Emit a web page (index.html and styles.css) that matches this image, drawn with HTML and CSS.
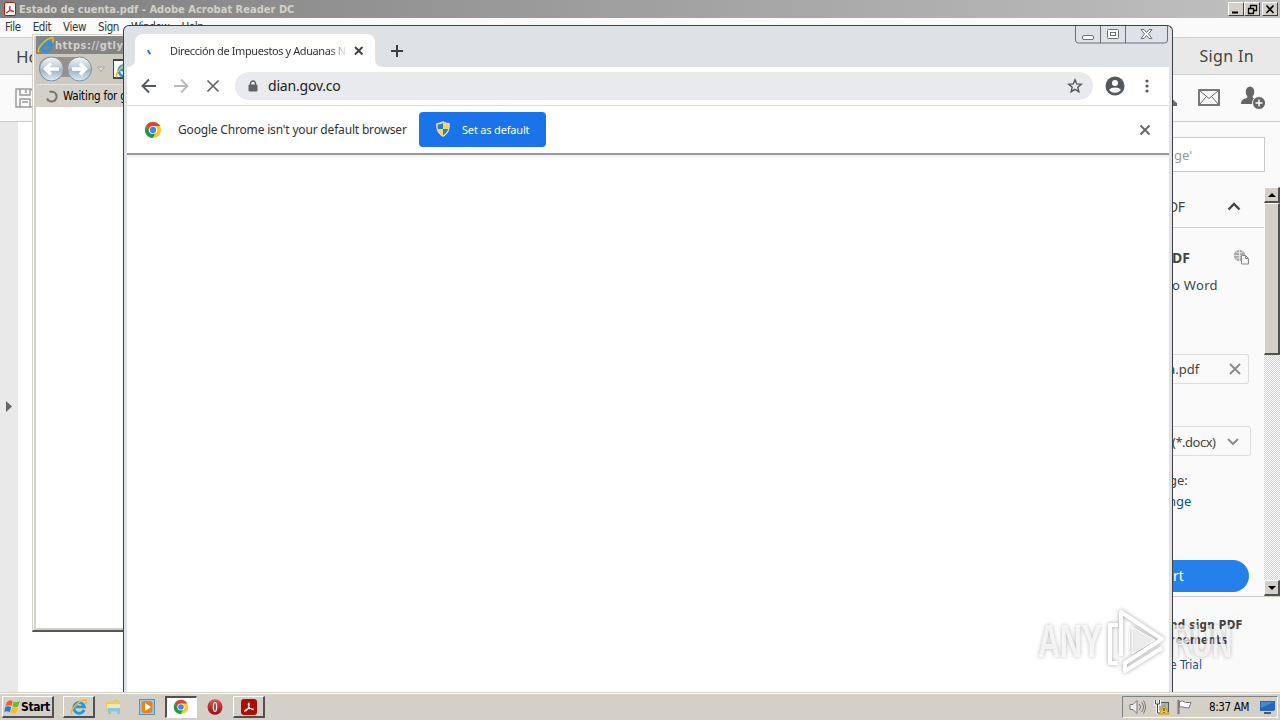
FILE: index.html
```html
<!DOCTYPE html>
<html lang="en">
<head>
<meta charset="utf-8">
<title>Desktop</title>
<link rel="stylesheet" href="styles.css">
</head>
<body>
<svg width="0" height="0" class="defs">
  <defs>
    <linearGradient id="orb" x1="0" y1="0" x2="0" y2="1"><stop offset="0" stop-color="#f4f8fa"/><stop offset=".45" stop-color="#bccbd5"/><stop offset=".55" stop-color="#9fb4c1"/><stop offset="1" stop-color="#d9eef5"/></linearGradient>
    <linearGradient id="opera" x1="0" y1="0" x2="0" y2="1"><stop offset="0" stop-color="#e0555a"/><stop offset="1" stop-color="#970b12"/></linearGradient>
    <symbol id="ie" viewBox="0 0 20 20">
      <path d="M15.700 13.200A6 6 0 1 1 16 9.800H6" fill="none" stroke="#2795df" stroke-width="3.200"/>
      <path d="M2.300 18C-1 15 8 4 15.500 2.200 18.500 1.500 19 4 17.200 7" fill="none" stroke="#e9bc25" stroke-width="1.700"/>
    </symbol>
    <symbol id="chrome" viewBox="0 0 20 20">
      <circle cx="10" cy="10" r="9" fill="#fbc72b"/>
      <path d="M2.200 5.500A9 9 0 0 0 9.500 19L13.700 12 10 10 6.300 12Z" fill="#189b58"/>
      <path d="M2.200 5.500A9 9 0 0 1 17.800 5.500H10L6 11Z" fill="#dc4437"/>
      <circle cx="10" cy="10" r="4.500" fill="#fff"/><circle cx="10" cy="10" r="3.500" fill="#4a83e8"/>
    </symbol>
    <symbol id="pdf" viewBox="0 0 16 16">
      <path d="M3 12.500C4 10 9.500 9 12.700 10.200 14 12 9 11 7.300 6.500 6.500 3 8.500 2.500 8.300 5 8 8.500 5 13.500 3 12.500Z" fill="none" stroke="currentColor" stroke-width="1.200"/>
    </symbol>
  </defs>
</svg>

<section class="acrobat">
  <header class="ac-title">
    <span class="ac-logo"><svg width="12" height="13"><use href="#pdf"/></svg></span>
    <span class="ac-name">Estado de cuenta.pdf - Adobe Acrobat Reader DC</span>
    <span class="win-btns">
      <b><svg width="15" height="13"><path d="M3 9.500h6" stroke="#000" stroke-width="2"/></svg></b>
      <b><svg width="15" height="13"><path d="M5.500 5V2.500h6v5H9M5 2.500h7M3.500 5.500h5v5h-5zM3 5.500h6" fill="none" stroke="#000" stroke-width="1.300"/></svg></b>
      <b class="last"><svg width="15" height="13"><path d="M3.500 2.500l7 7.500M10.500 2.500l-7 7.500" stroke="#000" stroke-width="1.700"/></svg></b>
    </span>
  </header>
  <nav class="ac-menu"><span>File</span><span>Edit</span><span>View</span><span>Sign</span><span>Window</span><span>Help</span></nav>
  <div class="ac-tabs"><span>Home</span><span class="signin">Sign In</span></div>
  <div class="ac-tools">
    <svg width="20" height="22" fill="none" stroke="#9a9a9a" stroke-width="1.500"><path d="M2 2h15l3 3v15H2zM6 2v6h10V2M12 3v3M6 20v-8h10v8M8 15h6"/></svg>
    <svg class="bell" width="8" height="22"><path d="M0 8q2 6 6 8v3H0z" fill="#666"/></svg>
    <svg width="24" height="20" fill="none" stroke="#6a6a6a"><rect x="2" y="2" width="20" height="15" stroke-width="1.800"/><path d="M2.500 2.500l9.500 8 9.500-8M2.500 16.500l7-8M21.500 16.500l-7-8" stroke-width="1"/></svg>
    <svg class="adduser" width="26" height="26" fill="#666"><ellipse cx="9" cy="7" rx="4.300" ry="5.500"/><path d="M0 19c0-4 2-5 6-6l1-3h4l1 3c2 .6 3 1 4 2l-3 4z"/><circle cx="18" cy="18" r="6.500" stroke="#fafafa"/><path d="M18 14.500v7M14.500 18h7" stroke="#fff" stroke-width="1.500"/></svg>
  </div>
  <div class="ac-body">
    <aside class="ac-rail"><svg width="6" height="11"><path d="M0 0l6 5.500L0 11z" fill="#666"/></svg></aside>
    <main class="ac-doc"></main>
    <aside class="ac-panel">
      <div class="search">ge'</div>
      <div class="scroll-area">
        <div class="tools">
          <div class="sec"><span>DF</span><svg width="14" height="9"><path d="M1.500 7.500L7 2l5.500 5.500" fill="none" stroke="#484848" stroke-width="2.400"/></svg></div>
          <div class="heading"><span>DF</span><svg width="17" height="16"><circle cx="6.500" cy="6.500" r="5.700" fill="#aaa"/><path d="M1 6.500h11M6.500 1v11M3 3q3.500 2 7 0M3 10q2-2 5-1" stroke="#eee" fill="none" stroke-width=".8"/><path d="M8.500 6.500h4l3 3v5.500h-7zM12.500 6.500v3h3" fill="#f7f7f7" stroke="#888"/></svg></div>
          <div class="word">o Word</div>
          <div class="file"><span>a.pdf</span><svg width="12" height="12"><path d="M1 1l10 10M11 1L1 11" stroke="#8b8b8b" stroke-width="2"/></svg></div>
          <div class="select"><span>(*.docx)</span><svg width="12" height="8"><path d="M1 1l5 5 5-5" fill="none" stroke="#8f8f8f" stroke-width="2.200"/></svg></div>
          <div class="lang">ge:</div>
          <div class="link">nge</div>
          <div class="convert">rt</div>
        </div>
        <div class="bar">
          <b><svg width="8" height="4"><path d="M0 4l4-4 4 4z"/></svg></b>
          <i></i>
          <b class="down"><svg width="8" height="4"><path d="M0 0h8L4 4z"/></svg></b>
        </div>
      </div>
      <div class="promo"><b>nd sign PDF</b><b>reements</b><span>e Trial</span></div>
    </aside>
  </div>
</section>

<section class="ie">
  <header class="ie-title"><svg width="18" height="18"><use href="#ie"/></svg><span>https://gtly</span></header>
  <div class="ie-nav">
    <svg width="54" height="28"><rect x="1" y="2" width="51" height="20" rx="10" fill="#98918a"/><g stroke="#7a929f"><circle cx="13.500" cy="14" r="12" fill="url(#orb)"/><circle cx="41.500" cy="14" r="12" fill="url(#orb)"/></g><path d="M21 14H8M13 8.500L7.500 14l5.500 5.500M34 14h13M42 8.500l5.500 5.500-5.500 5.500" fill="none" stroke="#fff" stroke-width="3.300"/></svg>
    <svg width="9" height="7"><path d="M.5 1h7L4 5.500z" fill="#ddd" stroke="#aaa49c"/></svg>
    <div class="ie-addr"><svg width="18" height="18"><use href="#ie"/></svg></div>
  </div>
  <div class="ie-tab"><svg width="13" height="13"><path d="M4.500 2A5 5 0 1 1 2 8.500" fill="none" stroke="#77746f" stroke-width="2"/></svg><span>Waiting for g</span></div>
  <div class="ie-page"></div>
</section>

<section class="chrome">
  <header class="strip">
    <svg class="flare" width="8" height="8"><path d="M8 0v8H0q8 0 8-8z" fill="#fff"/></svg>
    <div class="tab">
      <svg width="16" height="16"><path d="M5 7q.6 2.300 2.500 4" fill="none" stroke="#2e72dc" stroke-width="2"/></svg>
      <span class="tab-title">Dirección de Impuestos y Aduanas N</span>
      <svg class="tab-x" width="10" height="10"><path d="M1 1l7.500 7.500M8.500 1L1 8.500" stroke="#3e4145" stroke-width="1.900"/></svg>
    </div>
    <svg class="flare" width="8" height="8"><path d="M0 0v8h8Q0 8 0 0z" fill="#fff"/></svg>
    <svg class="plus" width="14" height="14"><path d="M7 1v12M1 7h12" stroke="#3c4043" stroke-width="2"/></svg>
    <svg class="caption" width="93" height="18" fill="none" stroke="#6a6f78"><path d="M.5 0v14q0 3 3 3h86q3 0 3-3V0M25.500 0v17M50.500 0v17"/><rect x="7.500" y="9.500" width="11" height="4" rx="1.500" fill="#fff"/><rect x="32.500" y="3.500" width="11" height="9" rx="1" fill="#fff"/><rect x="35.500" y="6.500" width="5" height="3"/><path d="M66 3.500h3l2.500 3 2.500-3h3L73.500 8l3.500 4.500h-3l-2.500-3-2.500 3h-3L69.500 8z" fill="#fff"/></svg>
  </header>
  <div class="toolbar">
    <svg width="16" height="16" fill="none" stroke="#55585c" stroke-width="1.900"><path d="M15 8H2M8 1.500L1.500 8 8 14.500"/></svg>
    <svg width="16" height="16" fill="none" stroke="#b7b9bb" stroke-width="1.900"><path d="M1 8h13M8 1.500L14.500 8 8 14.500"/></svg>
    <svg width="16" height="16" fill="none" stroke="#606367" stroke-width="1.700"><path d="M2.500 2.500l11 11M13.500 2.500l-11 11"/></svg>
    <div class="omni">
      <svg width="10" height="12"><path d="M2.500 5V3.500a2.500 2.500 0 0 1 5 0V5" fill="none" stroke="#5f6368" stroke-width="1.400"/><rect x=".5" y="4.500" width="9" height="7" rx="1" fill="#5f6368"/></svg>
      <span>dian.gov.co</span>
      <svg class="star" width="16" height="16"><path d="M8 1.800l1.700 4.100 4.600.4-3.500 3 1.100 4.400L8 11.400l-3.900 2.300 1.100-4.400-3.500-3 4.600-.4z" fill="none" stroke="#53575b" stroke-width="1.400"/></svg>
    </div>
    <svg class="avatar" width="20" height="20"><circle cx="10" cy="10" r="9.500" fill="#54585d"/><circle cx="10" cy="7" r="3" fill="#fff"/><path d="M4 13.800q2-2.400 6-2.400t6 2.400q-2 3-6 3t-6-3z" fill="#fff"/></svg>
    <svg class="dots" width="4" height="14" fill="#55595e"><circle cx="2" cy="2" r="1.600"/><circle cx="2" cy="7" r="1.600"/><circle cx="2" cy="12" r="1.600"/></svg>
  </div>
  <div class="info">
    <svg width="18" height="18"><use href="#chrome"/></svg>
    <span class="msg">Google Chrome isn't your default browser</span>
    <button class="default"><svg width="14" height="16"><path d="M7 .7Q10 2.500 13.300 2.500 14 12 7 15.500 0 12 .7 2.500 4 2.500 7 .7z" fill="#f2d75c" stroke="#d8dde2"/><path d="M7 2v6H2Q1.500 5 1.800 3.500 5 3.500 7 2zM7 8h5q-1 4-5 6z" fill="#347bb9"/></svg><span>Set as default</span></button>
    <svg class="info-x" width="12" height="12"><path d="M1.500 1.500l9 9M10.500 1.500l-9 9" stroke="#65696d" stroke-width="1.900"/></svg>
  </div>
  <div class="page"></div>
</section>

<svg class="mark" width="210" height="76">
  <g fill="#fff" fill-opacity=".75" font-family="Liberation Sans" font-weight="bold" font-size="46">
    <text x="2" y="51" textLength="64" lengthAdjust="spacingAndGlyphs">ANY</text>
    <text x="136" y="51" textLength="60" lengthAdjust="spacingAndGlyphs">RUN</text>
  </g>
  <g fill="none" stroke="#fff" stroke-width="4" stroke-linejoin="round"><path d="M82 19h-8v38h8"/><path d="M85 50V6l41 27-37 24v8l37-23"/><path d="M96 21l23 13-23 14z" fill="#e9e9e9" stroke-width="1"/></g>
</svg>

<footer class="taskbar">
  <div class="start"><svg width="17" height="16"><path d="M3 3q3-3 5.500-1L7.500 7Q5 5.500 1.500 7z" fill="#e85e28"/><path d="M9.500 2.500Q12 4 16 2l-2 5.500q-3 1.500-5.500-.2z" fill="#76b82a"/><path d="M1.300 8q3-1.500 5.800.2l-1.200 5Q3 11.500.3 13z" fill="#2879d0"/><path d="M8.300 8.500q3 1.500 5.500.2l-1.300 5q-3 1.800-5.500-.2z" fill="#f5bd20"/></svg><b>Start</b></div>
  <div class="task raised"><svg width="18" height="18"><use href="#ie"/></svg></div>
  <div class="task"><svg width="17" height="16"><path d="M1 3h6l1-2h6l1 2v10H1z" fill="#e9c76b"/><path d="M2 5h13v5H2z" fill="#f6e6a8"/><path d="M3 15V9h12v6h-3v-3H6v3z" fill="#80c9ea"/></svg></div>
  <div class="task"><svg width="17" height="17"><rect x=".5" y=".5" width="15" height="15" fill="#9fc7e4" stroke="#5e91b8"/><rect x="2.500" y="2" width="11" height="12" rx="3" fill="#ee8215"/><path d="M6 4l6 4-6 4z" fill="#fff"/></svg></div>
  <div class="task pressed"><svg width="16" height="16"><use href="#chrome"/></svg></div>
  <div class="task"><svg width="16" height="16"><ellipse cx="8" cy="8" rx="7.500" ry="7.700" fill="url(#opera)"/><ellipse cx="8" cy="8" rx="2.300" ry="5" fill="#f4e8e8"/><ellipse cx="8" cy="8" rx="1" ry="4" fill="#8a5055"/></svg></div>
  <div class="task raised"><span class="pdf-sq"><svg width="14" height="14"><use href="#pdf"/></svg></span></div>
  <div class="tray">
    <svg width="18" height="16" fill="none" stroke="#777"><path d="M1 5.500h3l4-4v13l-4-4H1z" fill="#eee"/><path d="M10.500 5q2 3 0 6M12.500 3q4 5 0 10M14.500 1.500q4 6.500 0 13"/></svg>
    <svg width="17" height="16"><rect x="4.500" y="3.500" width="11" height="9" fill="#aab2b8" stroke="#555"/><path d="M2.500 1v4h4V1M4.500 5v8h4" fill="none" stroke="#fff" stroke-width="3"/><path d="M2.500 1v4h4V1M4.500 5v9h4" fill="none" stroke="#444"/><path d="M11 6l5 9H6z" fill="#f7cc22" stroke="#c59210"/><path d="M11 9v3M11 13v1" stroke="#222"/></svg>
    <svg width="17" height="16"><path d="M2.500 1v14" stroke="#777" stroke-width="2"/><path d="M3.500 2.500q3-1.500 6 1h5.500l-2 5.500-4-.3q-3-1.500-5.500-.7z" fill="#fff" stroke="#777"/></svg>
    <span>8:37 AM</span>
    <svg width="16" height="15"><path d="M0 1h15v9l-2 1H0z" fill="#2567b4"/><path d="M1 2h13L1 8z" fill="#438bd2"/><path d="M4 13h7" stroke="#4a5968" stroke-width="2"/></svg>
  </div>
</footer>
</body>
</html>
```

FILE: styles.css
```css
* { box-sizing: border-box; }
body { margin: 0; width: 1280px; height: 720px; overflow: hidden; position: relative; background: #fff; color: #222; font: 12px "Noto Sans", sans-serif; }
svg { display: block; flex: none; }
span { white-space: nowrap; }
.defs { position: absolute; }

.acrobat { position: absolute; inset: 0 0 28px; display: flex; flex-direction: column; background: #fafafa; }
.ac-title { height: 18px; flex: none; display: flex; align-items: center; padding: 0 2px 0 4px; background: linear-gradient(90deg, #808080, #c0c0c0); color: #d4d0c8; }
.ac-logo { width: 12px; height: 14px; background: #fff; border: 1px solid #b81414; border-radius: 2px; color: #c00; overflow: hidden; display: flex; justify-content: center; }
.ac-name { margin-left: 3px; font: bold 11px "DejaVu Sans Condensed", "DejaVu Sans", sans-serif; letter-spacing: .02px; }
.win-btns { margin-left: auto; display: flex; }
.win-btns b { width: 16px; height: 14px; background: #d4d0c8; border: 1px solid; border-color: #fff #404040 #404040 #fff; }
.win-btns .last { margin-left: 2px; }
.ac-menu { height: 19px; flex: none; display: flex; align-items: center; gap: 12px; padding-left: 5px; font: 11.500px/19px "DejaVu Sans Condensed", sans-serif; letter-spacing: -.4px; color: #333; }
.ac-tabs { height: 38px; flex: none; background: #e9e9e9; border: solid #cfcfcf; border-width: 1px 0; display: flex; align-items: center; justify-content: space-between; padding: 0 26px 0 16px; font-size: 17px; color: #444; }
.signin { font-size: 16px; letter-spacing: .35px; }
.ac-tools { height: 47px; flex: none; display: flex; align-items: center; padding: 0 13px 0 14px; border-bottom: 1px solid #c8c8c8; }
.bell { margin: 0 18px 0 auto; }
.ac-tools svg + svg + svg { margin-left: 0; }
.ac-tools .adduser { margin-left: 20px; }
.ac-body { flex: 1; display: flex; min-height: 0; }
.ac-rail { width: 18px; background: #e9e9e9; padding: 279px 0 0 6px; }
.ac-doc { flex: 1; background: #fff; }
.ac-panel { width: 108px; display: flex; flex-direction: column; background: #fafafa; font-size: 13px; color: #444; }
.search { height: 35px; margin: 15px 15px 15px 0; border: 1px solid #c8c8c8; border-left: 0; background: #fff; line-height: 34px; padding-left: 2px; color: #999; }
.scroll-area { height: 410px; flex: none; display: flex; border-bottom: 1px solid #ccc; }
.tools { flex: 1; overflow: hidden; }
.sec { height: 41px; border-bottom: 1px solid #d2d2d2; display: flex; align-items: center; justify-content: space-between; padding: 0 23px 1px 0; font-size: 14px; }
.sec span { margin-left: -4px; letter-spacing: -.5px; }
.heading { height: 32px; margin-top: 13px; display: flex; align-items: center; justify-content: space-between; padding-right: 14px; font-weight: bold; font-size: 14px; }
.word { line-height: 24px; letter-spacing: .3px; }
.file { width: 77px; height: 30px; margin-top: 57px; border: 1px solid #ddd; border-left: 0; border-radius: 0 3px 3px 0; display: flex; align-items: center; justify-content: space-between; padding-right: 7px; }
.file span { margin-left: -4px; }
.select { width: 79px; height: 30px; margin-top: 42px; border: 1px solid #ddd; border-left: 0; border-radius: 0 3px 3px 0; display: flex; align-items: center; justify-content: space-between; padding: 1px 11px 0 0; letter-spacing: -.5px; }
.lang { margin-top: 14px; line-height: 20px; margin-left: -3px; }
.link { line-height: 22px; margin-left: -4px; color: #0a4f94; }
.convert { width: 77px; height: 32px; margin-top: 48px; border-radius: 0 16px 16px 0; background: #2680eb; color: #fff; line-height: 32px; padding-left: 1px; font-size: 14px; }
.bar { width: 16px; display: flex; flex-direction: column; background: repeating-conic-gradient(#fff 0 25%, #d4d0c8 0 50%) 0 0/2px 2px; }
.bar b, .bar i { background: #d4d0c8; border: solid; border-width: 1px 2px 2px 1px; border-color: #fff #505050 #505050 #fff; }
.bar b { height: 16px; display: flex; align-items: center; justify-content: center; }
.bar i { height: 152px; }
.bar .down { margin-top: auto; }
.promo { display: flex; flex-direction: column; padding-top: 21px; font: 12px/15px "DejaVu Sans Condensed", sans-serif; }
.promo b { font-size: 11.500px; letter-spacing: .3px; margin-left: -2px; white-space: nowrap; }
.promo span { margin: 10px 0 0 -2px; color: #174f91; }

.ie { position: absolute; left: 32px; top: 34px; width: 300px; height: 598px; display: flex; flex-direction: column; background: #d4d0c8; border: solid; border-width: 1px 0 2px 1px; border-color: #d4d0c8 #555 #555 #d4d0c8; box-shadow: inset 1px 1px #fff; padding: 1px 0 2px 3px; }
.ie-title { height: 18px; flex: none; background: #858585; display: flex; align-items: center; padding-left: 1px; color: #d4d0c8; font: bold 11px "DejaVu Sans Condensed", sans-serif; letter-spacing: .5px; }
.ie-nav { height: 30px; flex: none; display: flex; align-items: center; padding-left: 2px; background: #cdc8c0; }
.ie-nav svg + svg { margin-left: 5px; }
.ie-addr { margin-left: 7px; flex: 1; height: 20px; background: #fff; border: 1px solid #444; border-width: 2px 1px; padding-left: 1px; }
.ie-tab { height: 23px; flex: none; margin-left: 1px; border-top: 1px solid #e8e5e0; display: flex; align-items: center; padding-left: 8px; gap: 5px; font: 11.500px "DejaVu Sans Condensed", sans-serif; letter-spacing: -.2px; color: #000; }
.ie-page { flex: 1; background: #fff; }

.chrome { position: absolute; left: 123px; top: 25px; width: 1050px; height: 667px; display: flex; flex-direction: column; background: #dee1e6; border: 1px solid #3d3f42; border-bottom: 0; border-radius: 6px 6px 0 0; padding: 0 3px; overflow: hidden; }
.strip { height: 41px; flex: none; display: flex; }
.flare { align-self: flex-end; }
.tab { width: 240px; height: 33px; margin-top: 8px; background: #fff; border-radius: 8px 8px 0 0; display: flex; align-items: center; padding: 0 11px 0 8px; }
.tab-title { width: 177px; margin-left: 11px; overflow: hidden; font-size: 11px; color: #333; letter-spacing: -.4px; -webkit-mask: linear-gradient(90deg, #000 90%, transparent); mask: linear-gradient(90deg, #000 90%, transparent); }
.tab-x { margin-left: auto; }
.plus { margin: 18px 0 0 7px; }
.caption { margin: 0 1px 0 auto; }
.toolbar { height: 38px; flex: none; display: flex; align-items: center; padding: 0 20px 0 14px; background: #fff; gap: 16px; }
.omni { flex: 1; height: 28px; margin-left: -2px; border-radius: 14px; background: #e8eaed; display: flex; align-items: center; padding: 0 10px 0 13px; font-size: 14px; letter-spacing: -.2px; color: #202124; }
.omni span { margin: -2px 0 0 10px; }
.star { margin-left: auto; }
.avatar { margin-left: -4px; }
.dots { margin-left: 4px; }
.info { height: 50px; flex: none; display: flex; align-items: center; border-top: 1px solid #dcdcdc; border-bottom: 2px solid #999; background: #fff; padding: 0 18px 0 17px; }
.msg { width: 229px; margin: 0 12px 0 16px; font-size: 12px; letter-spacing: -.18px; color: #333; }
.default { width: 127px; height: 35px; border: 0; border-radius: 4px; background: #1a73e8; color: #fff; display: flex; align-items: center; padding: 0 0 1px 17px; gap: 12px; font: 11px "Noto Sans", sans-serif; letter-spacing: -.18px; }
.info-x { margin-left: auto; }
.page { flex: 1; background: linear-gradient(#ededed, #fff 4px); }

.mark { position: absolute; left: 1036px; top: 606px; opacity: .9; filter: drop-shadow(0 0 2px rgba(0,0,0,.4)); }

.taskbar { position: absolute; left: 0; right: 0; bottom: 0; height: 28px; display: flex; align-items: center; background: #d4d0c8; border-top: 1px solid #d4d0c8; box-shadow: inset 0 1px #fff; padding: 1px 2px 0; }
.start { width: 52px; height: 22px; display: flex; align-items: center; padding-left: 1px; border: solid; border-width: 1px 2px 2px 1px; border-color: #fff #505050 #505050 #fff; color: #000; font: bold 12px "DejaVu Sans Condensed", sans-serif; letter-spacing: -.4px; margin-right: 9px; }
.task { width: 32px; height: 22px; margin-right: 2px; display: flex; align-items: center; justify-content: center; border: 1px solid transparent; }
.raised { border-width: 1px 2px 2px 1px; border-color: #fff #505050 #505050 #fff; }
.pressed { background: #fff; border-width: 2px 1px 1px 2px; border-color: #505050 #fff #fff #505050; padding: 0 2px 2px 0; }
.pdf-sq { width: 16px; height: 16px; border-radius: 3px; background: #b30b00; color: #fff; padding: 1px; }
.tray { margin-left: auto; width: 156px; height: 22px; display: flex; align-items: center; gap: 6px; padding-left: 6px; border: 1px solid; border-color: #808080 #fff #fff #808080; color: #000; font: 11.500px "DejaVu Sans Condensed", sans-serif; }
.tray span { width: 42px; margin: 0 3px 0 10px; letter-spacing: -.35px; }
```
